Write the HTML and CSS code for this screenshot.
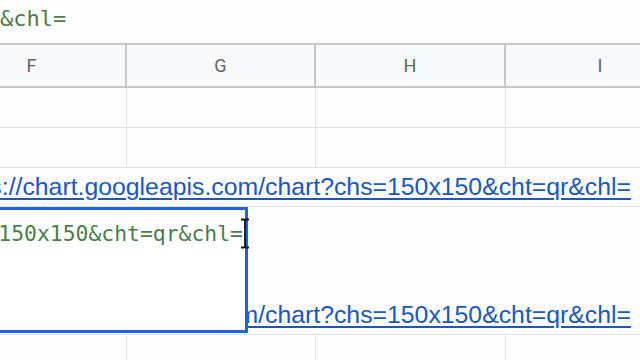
FILE: index.html
```
<html>
<head>
    <meta charset="utf-8">
    <link rel="stylesheet" href="styles.css">
</head>
<body>
    <div class="formula-bar">&amp;chl=</div>

    <div class="sheet">
        <div class="row head">
            <div class="cell">F</div>
            <div class="cell">G</div>
            <div class="cell">H</div>
            <div class="cell">I</div>
        </div>

        <div class="row">
            <div class="cell"></div>
            <div class="cell"></div>
            <div class="cell"></div>
            <div class="cell"></div>
        </div>

        <div class="row">
            <div class="cell"></div>
            <div class="cell"></div>
            <div class="cell"></div>
            <div class="cell"></div>
        </div>

        <div class="row link-row">
            <div class="cell wide">
                <a class="link" href="#">https://chart.googleapis.com/chart?chs=150x150&amp;cht=qr&amp;chl=</a>
            </div>
        </div>

        <div class="row link-row tall">
            <div class="cell wide">
                <a class="link" href="#">https://chart.googleapis.com/chart?chs=150x150&amp;cht=qr&amp;chl=</a>
            </div>
            <div class="editor">
                <div class="editor-line">
                    <span class="editor-text">chart?chs=150x150&amp;cht=qr&amp;chl=</span>
                </div>
                <svg class="ibeam" width="10" height="31" viewBox="0 0 10 31">
                    <path d="M1 1.5 H4 Q5 1.5 5 3 V28 Q5 29.5 4 29.5 H1 M9 1.5 H6 Q5 1.5 5 3 M5 28 Q5 29.5 6 29.5 H9" fill="none" stroke="#111" stroke-width="1.8"/>
                </svg>
            </div>
        </div>

        <div class="row">
            <div class="cell"></div>
            <div class="cell"></div>
            <div class="cell"></div>
            <div class="cell"></div>
        </div>
    </div>
</body>
</html>
```

FILE: styles.css
```
:root {
    --grid-line: #e2e3e3;
    --head-line: #c4c6c8;
    --head-bg: #f8f9fa;
    --head-text: #5f6368;
    --link: #1a56c4;
    --formula: #4b7d4a;
    --select: #1a66d9;
}

body {
    margin: 0;
    background: #fdfdfd;
    overflow: hidden;
    width: 640px;
    height: 360px;
}

.formula-bar {
    height: 43px;
    box-sizing: border-box;
    padding-top: 8px;
    font-family: 'DejaVu Sans Mono', monospace;
    font-size: 22px;
    line-height: 22px;
    color: var(--formula);
    white-space: nowrap;
}

.sheet {
    margin-left: -62px;
    width: 758px;
}

.row {
    display: grid;
    grid-template-columns: 189px 189px 190px 190px;
    height: 40px;
    box-sizing: border-box;
    border-bottom: 1px solid var(--grid-line);
}

.cell {
    border-right: 1px solid var(--grid-line);
}

.head {
    height: 45px;
    background: var(--head-bg);
    border-top: 2px solid var(--head-line);
    border-bottom: 2px solid var(--head-line);
}

.head .cell {
    border-right: 2px solid var(--head-line);
    display: flex;
    align-items: center;
    justify-content: center;
    font-family: Roboto, 'Liberation Sans', sans-serif;
    font-size: 18px;
    color: var(--head-text);
}

.link-row {
    height: 39px;
}

.link-row.tall {
    height: 128px;
    position: relative;
}

.cell.wide {
    grid-column: 1 / -1;
    border-right: none;
    display: flex;
    align-items: flex-end;
    padding: 0 0 5px 10px;
    white-space: nowrap;
    overflow: hidden;
}

.link {
    font-family: 'Liberation Sans', Arial, sans-serif;
    font-size: 24.8px;
    line-height: 28px;
    color: var(--link);
    text-decoration: underline;
    text-underline-offset: 3px;
}

.editor {
    position: absolute;
    left: 0;
    top: 0;
    width: 310px;
    height: 126px;
    box-sizing: border-box;
    border: 3px solid var(--select);
    background: #fff;
}

.editor-line {
    display: flex;
    justify-content: flex-end;
    padding: 11px 2px 0 0;
    overflow: hidden;
}

.editor-text {
    flex-shrink: 0;
    font-family: 'DejaVu Sans Mono', monospace;
    font-size: 21.4px;
    line-height: 26px;
    color: var(--formula);
    white-space: nowrap;
}

.ibeam {
    position: absolute;
    right: -5px;
    top: 8px;
}
```
